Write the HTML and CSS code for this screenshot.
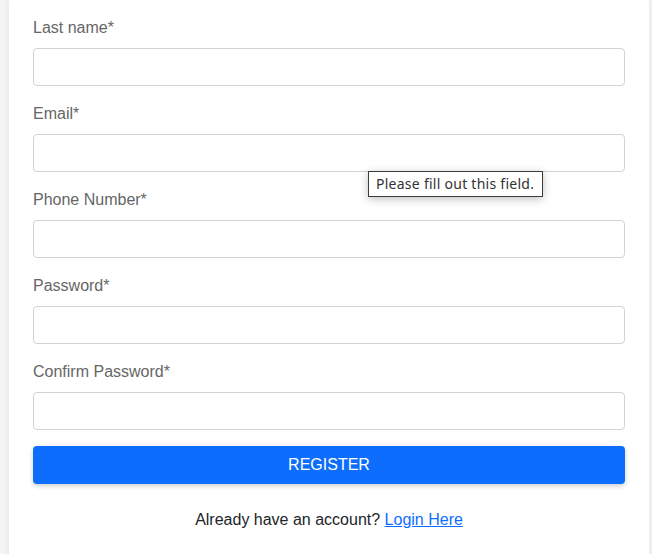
FILE: index.html
```html
<!DOCTYPE html>
<html lang="en">
<head>
<meta charset="utf-8">
<title>Register</title>
<link rel="stylesheet" href="styles.css">
</head>
<body>
<div class="page">
  <form class="card">
    <div class="field">
      <label class="label">Last name*</label>
      <input class="input" type="text">
    </div>
    <div class="field has-tip">
      <label class="label">Email*</label>
      <input class="input" type="email">
      <div class="tip">Please fill out this field.</div>
    </div>
    <div class="field">
      <label class="label">Phone Number*</label>
      <input class="input" type="text">
    </div>
    <div class="field">
      <label class="label">Password*</label>
      <input class="input" type="password">
    </div>
    <div class="field">
      <label class="label">Confirm Password*</label>
      <input class="input" type="password">
    </div>
    <button class="btn" type="button">REGISTER</button>
    <p class="footer">Already have an account? <a class="link" href="#">Login Here</a></p>
  </form>
</div>
</body>
</html>
```

FILE: styles.css
```css
html, body {
  margin: 0;
  padding: 0;
  height: 100%;
  overflow: hidden;
}
body {
  background: #f4f4f4;
  font-family: "Liberation Sans", Arial, sans-serif;
  font-size: 16px;
  line-height: 24px;
  color: #212529;
}
.page {
  padding: 0 3px 0 9px;
  height: 100%;
}
.card {
  box-sizing: border-box;
  background: #fff;
  min-height: 100%;
  padding: 16px 24px 40px;
  box-shadow: 0 0 8px rgba(0, 0, 0, 0.07);
  display: flex;
  flex-direction: column;
}
.field {
  display: flex;
  flex-direction: column;
  gap: 8px;
  margin-bottom: 16px;
}
.has-tip {
  position: relative;
}
.label {
  color: #666;
}
.input {
  box-sizing: border-box;
  height: 38px;
  width: 100%;
  margin: 0;
  border: 1px solid #ced4da;
  border-radius: 4px;
  background: #fff;
  font: inherit;
}
.tip {
  position: absolute;
  left: 335px;
  top: 69px;
  box-sizing: border-box;
  width: 175px;
  height: 26px;
  border: 1px solid #3c3c3c;
  background: #fff;
  color: #333;
  font-family: "Noto Sans", "DejaVu Sans", sans-serif;
  font-size: 14px;
  letter-spacing: 0.26px;
  line-height: 24px;
  padding: 0 7px;
  white-space: nowrap;
  box-shadow: 0 2px 8px rgba(0, 0, 0, 0.25);
}
.btn {
  height: 38px;
  border: none;
  border-radius: 4px;
  background: #0d6efd;
  color: #fff;
  font: inherit;
  box-shadow: 0 2px 5px rgba(0, 0, 0, 0.2);
  padding: 0;
}
.footer {
  margin: 24px 0 0;
  text-align: center;
}
.link {
  color: #0d6efd;
  text-decoration: underline;
}
```
